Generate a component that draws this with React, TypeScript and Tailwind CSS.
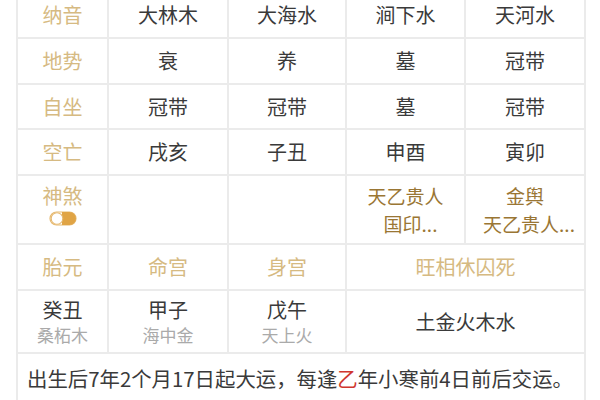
import React from "react";

const cell = "border-2 border-[#ebebeb] text-center align-middle";
const label = `${cell} text-[#d6ba82]`;
const val = `${cell} text-[#3a3a3a]`;

function Toggle() {
  return (
    <svg width="28" height="15" viewBox="0 0 28 15" className="mx-auto mt-[5px] block">
      <rect x="1" y="1" width="26" height="13" rx="6.5" fill="#fff" stroke="#e6b970" strokeWidth="1.2" />
      <path d="M13 1 H20.5 A6.5 6.5 0 0 1 20.5 14 H13 Z" fill="#e0a445" />
      <circle cx="8" cy="7.5" r="5.8" fill="#fff" stroke="#e6b970" strokeWidth="1.1" />
    </svg>
  );
}

export default function App() {
  return (
    <div
      className="h-[400px] w-[600px] overflow-hidden bg-white"
      style={{ fontFamily: '"Noto Sans CJK SC", "Noto Sans", sans-serif' }}
    >
      <table className="-mt-[10px] ml-[16px] w-[568px] table-fixed border-collapse text-[20px] leading-none">
        <colgroup>
          <col className="w-[91px]" />
          <col className="w-[120px]" />
          <col className="w-[118px]" />
          <col className="w-[119px]" />
          <col className="w-[120px]" />
        </colgroup>
        <tbody>
          <tr className="h-[47px]">
            <td className={label}>纳音</td>
            <td className={val}>大林木</td>
            <td className={val}>大海水</td>
            <td className={val}>涧下水</td>
            <td className={val}>天河水</td>
          </tr>
          <tr className="h-[46px]">
            <td className={label}>地势</td>
            <td className={val}>衰</td>
            <td className={val}>养</td>
            <td className={val}>墓</td>
            <td className={val}>冠带</td>
          </tr>
          <tr className="h-[45px]">
            <td className={label}>自坐</td>
            <td className={val}>冠带</td>
            <td className={val}>冠带</td>
            <td className={val}>墓</td>
            <td className={val}>冠带</td>
          </tr>
          <tr className="h-[46px]">
            <td className={label}>空亡</td>
            <td className={val}>戌亥</td>
            <td className={val}>子丑</td>
            <td className={val}>申酉</td>
            <td className={val}>寅卯</td>
          </tr>
          <tr className="h-[69px]">
            <td className={`${label} align-top pt-[10px]`}>
              神煞
              <Toggle />
            </td>
            <td className={val}></td>
            <td className={val}></td>
            <td className={`${cell} text-[19px] leading-[28px] text-[#9a7634]`}>
              天乙贵人
              <br />
              <span className="pl-[10px]">国印...</span>
            </td>
            <td className={`${cell} text-[19px] leading-[28px] text-[#9a7634]`}>
              金舆
              <br />
              <span className="whitespace-nowrap pl-[8px]">天乙贵人...</span>
            </td>
          </tr>
          <tr className="h-[46px]">
            <td className={label}>胎元</td>
            <td className={label}>命宫</td>
            <td className={label}>身宫</td>
            <td className={label} colSpan={2}>
              旺相休囚死
            </td>
          </tr>
          <tr className="h-[63px]">
            <td className={val}>
              <div>癸丑</div>
              <div className="mt-[6px] text-[17px] text-[#aaa]">桑柘木</div>
            </td>
            <td className={val}>
              <div>甲子</div>
              <div className="mt-[6px] text-[17px] text-[#aaa]">海中金</div>
            </td>
            <td className={val}>
              <div>戊午</div>
              <div className="mt-[6px] text-[17px] text-[#aaa]">天上火</div>
            </td>
            <td className={val} colSpan={2}>
              土金火木水
            </td>
          </tr>
          <tr className="h-[50px]">
            <td className={`${val} whitespace-nowrap pl-[9px] pt-[2px] !text-left align-top`} colSpan={5}>
              <div className="pt-[12px] text-[20.4px]">
                出生后7年2个月17日起大运，每逢<span className="text-[#d0362e]">乙</span>年小寒前4日前后交运。
              </div>
            </td>
          </tr>
        </tbody>
      </table>
    </div>
  );
}
